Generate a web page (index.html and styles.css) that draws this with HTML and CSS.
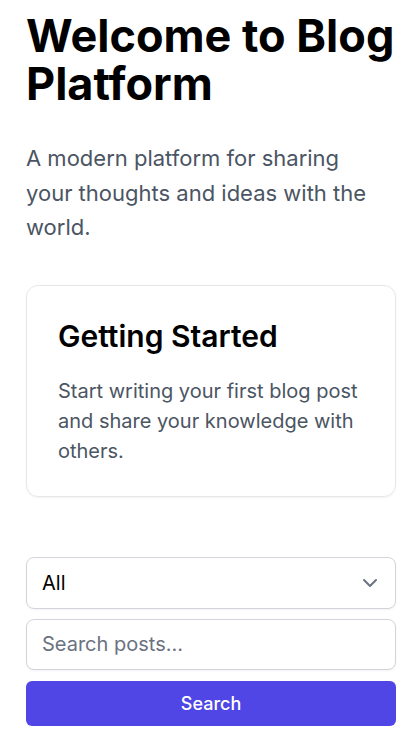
FILE: index.html
```html
<!DOCTYPE html>
<html lang="en">
<head>
<meta charset="utf-8">
<title>Blog Platform</title>
<link rel="stylesheet" href="styles.css">
</head>
<body>
<main class="page">
  <section class="hero">
    <h1 class="hero-title">Welcome to Blog Platform</h1>
    <p class="hero-text">A modern platform for sharing your thoughts and ideas with the world.</p>
  </section>
  <section class="card">
    <h2 class="card-title">Getting Started</h2>
    <p class="card-text">Start writing your first blog post and share your knowledge with others.</p>
  </section>
  <form class="search">
    <div class="select">
      <span class="select-value">All</span>
      <svg class="chevron" width="16" height="10" viewBox="0 0 16 10" fill="none" stroke="#6b7280" stroke-width="2" stroke-linecap="round" stroke-linejoin="round"><path d="M2 2l6 6 6-6"/></svg>
    </div>
    <input class="search-input" type="text" placeholder="Search posts...">
    <button class="search-button" type="button">Search</button>
  </form>
</main>
</body>
</html>
```
FILE: styles.css
```css
* { box-sizing: border-box; }
html, body { margin: 0; padding: 0; background: #fff; }
body { font-family: Inter, "Noto Sans", sans-serif; color: #000; }
.page { padding: 12px 19px 24px 26px; display: flex; flex-direction: column; }
.hero-title { margin: 0; font-size: 45px; line-height: 48px; font-weight: 700; }
.hero-text { margin: 33px 0 0; max-width: 355px; font-size: 22px; line-height: 34.5px; color: #4b5563; }
.card { margin-top: 40px; border: 1px solid #e5e7eb; border-radius: 12px; padding: 32px 31px 30px; box-shadow: 0 1px 2px rgba(0,0,0,0.05); }
.card-title { margin: 0; font-size: 30px; line-height: 36px; font-weight: 600; }
.card-text { margin: 22px 0 0; font-size: 20px; line-height: 30px; color: #4b5563; }
.search { margin-top: 60px; display: flex; flex-direction: column; }
.select { height: 52px; border: 1px solid #d1d5db; border-radius: 8px; display: flex; align-items: center; justify-content: space-between; padding: 0 17px 0 15px; box-shadow: 0 1px 2px rgba(0,0,0,0.05); }
.select-value { font-size: 20px; }
.search-input { margin-top: 10px; height: 51px; border: 1px solid #d1d5db; border-radius: 8px; padding: 0 15px; font-family: inherit; font-size: 20px; color: #111827; box-shadow: 0 1px 2px rgba(0,0,0,0.05); outline: none; }
.search-input::placeholder { color: #6b7280; }
.search-button { margin-top: 11px; height: 45px; border: 0; border-radius: 6px; background: #4f46e5; color: #fff; font-family: inherit; font-size: 18px; font-weight: 500; }
```
